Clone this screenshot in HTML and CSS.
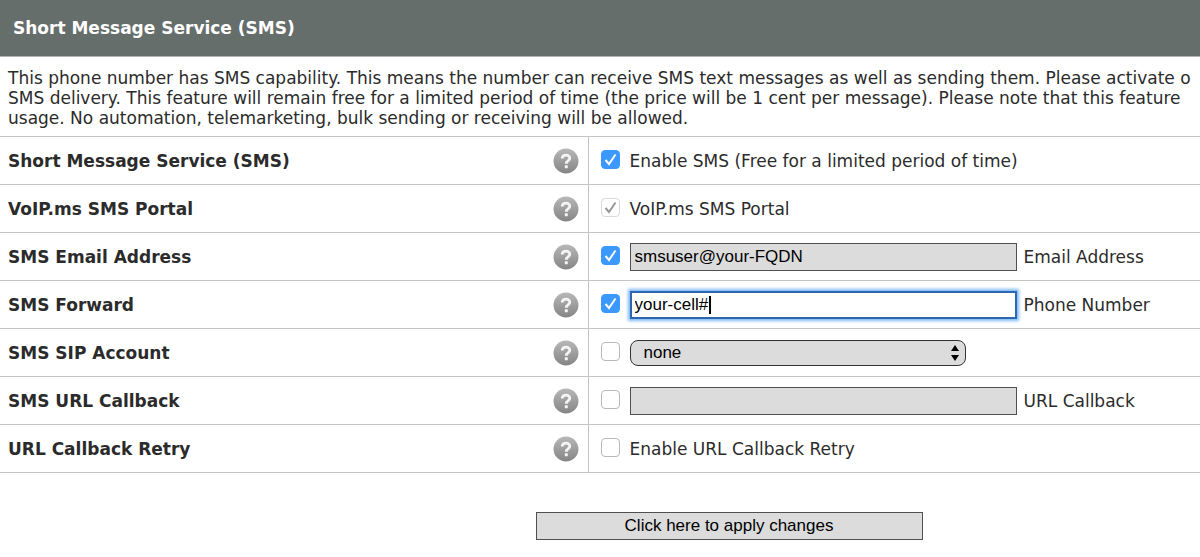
FILE: index.html
```html
<!DOCTYPE html>
<html lang="en">
<head>
  <meta charset="UTF-8" />
  <meta name="viewport" content="width=device-width, initial-scale=1.0"/>
  <title>Short Message Service (SMS)</title>
  <link rel="stylesheet" href="styles.css">
</head>
<body>
    <!-- shared icon for the help buttons -->
    <svg class="sprite" aria-hidden="true">
        <defs>
            <linearGradient id="ball" x1="0" y1="0" x2="0" y2="1">
                <stop offset="0" stop-color="#b8b8b8"/>
                <stop offset="1" stop-color="#858585"/>
            </linearGradient>
            <symbol id="help" viewBox="0 0 26 26">
                <circle cx="13" cy="13" r="12.5" fill="url(#ball)"/>
                <path d="M9.2 10.4C9.2 6 16.8 6 16.8 10.2C16.8 12.6 13.3 12.6 13.3 15.8" fill="none" stroke="#f4f4f4" stroke-width="2.8"/>
                <circle cx="13.3" cy="18.8" r="1.7" fill="#f4f4f4"/>
            </symbol>
        </defs>
    </svg>

    <form class="sms-form">
        <h1 class="title">Short Message Service (SMS)</h1>
        <p class="intro">This phone number has SMS capability. This means the number can receive SMS text messages as well as sending them. Please activate o<br>
        SMS delivery. This feature will remain free for a limited period of time (the price will be 1 cent per message). Please note that this feature<br>
        usage. No automation, telemarketing, bulk sending or receiving will be allowed.</p>

        <table class="settings">
            <tr>
                <th scope="row"><div class="name">Short Message Service (SMS) <button type="button" class="help" aria-label="Help"><svg><use href="#help"/></svg></button></div></th>
                <td><div class="value"><input type="checkbox" id="sms" checked><label for="sms">Enable SMS (Free for a limited period of time)</label></div></td>
            </tr>
            <tr>
                <th scope="row"><div class="name">VoIP.ms SMS Portal <button type="button" class="help" aria-label="Help"><svg><use href="#help"/></svg></button></div></th>
                <td><div class="value"><input type="checkbox" id="portal" checked disabled><label for="portal">VoIP.ms SMS Portal</label></div></td>
            </tr>
            <tr>
                <th scope="row"><div class="name">SMS Email Address <button type="button" class="help" aria-label="Help"><svg><use href="#help"/></svg></button></div></th>
                <td><div class="value"><input type="checkbox" aria-label="SMS Email Address" checked><span class="field"><input type="text" class="text" id="email" value="smsuser@your-FQDN"></span><label for="email">Email Address</label></div></td>
            </tr>
            <tr>
                <th scope="row"><div class="name">SMS Forward <button type="button" class="help" aria-label="Help"><svg><use href="#help"/></svg></button></div></th>
                <td><div class="value"><input type="checkbox" aria-label="SMS Forward" checked><span class="field"><input type="text" class="text active" id="phone" value="your-cell#"><span class="caret"></span></span><label for="phone">Phone Number</label></div></td>
            </tr>
            <tr>
                <th scope="row"><div class="name">SMS SIP Account <button type="button" class="help" aria-label="Help"><svg><use href="#help"/></svg></button></div></th>
                <td><div class="value"><input type="checkbox" aria-label="SMS SIP Account"><span class="field"><select class="account" aria-label="SIP Account"><option>none</option></select><svg class="arrows" viewBox="0 0 8 16"><path d="M4 0L8 6H0ZM0 10H8L4 16Z"/></svg></span></div></td>
            </tr>
            <tr>
                <th scope="row"><div class="name">SMS URL Callback <button type="button" class="help" aria-label="Help"><svg><use href="#help"/></svg></button></div></th>
                <td><div class="value"><input type="checkbox" aria-label="SMS URL Callback"><span class="field"><input type="text" class="text" id="url"></span><label for="url">URL Callback</label></div></td>
            </tr>
            <tr>
                <th scope="row"><div class="name">URL Callback Retry <button type="button" class="help" aria-label="Help"><svg><use href="#help"/></svg></button></div></th>
                <td><div class="value"><input type="checkbox" id="retry"><label for="retry">Enable URL Callback Retry</label></div></td>
            </tr>
        </table>

        <div class="actions">
            <button type="submit" class="apply">Click here to apply changes</button>
        </div>
    </form>
</body>
</html>
```

FILE: styles.css
```css
* {
    margin: 0;
    padding: 0;
    box-sizing: border-box;
}

body {
    background-color: #fff;
    color: #2b2b2b;
    font-family: Verdana, 'DejaVu Sans', sans-serif;
    font-size: 17px;
    line-height: 20px;
    overflow: hidden;
}

.sprite {
    position: absolute;
    width: 0;
    height: 0;
}

.title {
    background-color: #666e6c;
    color: #fff;
    font-size: 17px;
    line-height: 20px;
    padding: 18px 13px;
    border-bottom: 1px solid #b0b0b0;
}

.intro {
    padding: 11px 8px 8px;
    white-space: nowrap;
}

/* Settings */
.settings {
    width: 100%;
    table-layout: fixed;
    border-collapse: collapse;
    border-top: 1px solid #c4c4c4;
}

.settings th,
.settings td {
    height: 48px;
    border-bottom: 1px solid #c4c4c4;
    text-align: left;
    vertical-align: middle;
    white-space: nowrap;
}

.settings th {
    width: 49%;
    border-right: 1px solid #c4c4c4;
}

.name {
    display: flex;
    align-items: center;
    justify-content: space-between;
    padding: 0 9px 0 8px;
}

.help {
    width: 26px;
    height: 26px;
    border: none;
    background: none;
    cursor: pointer;
}

.help svg {
    display: block;
    width: 26px;
    height: 26px;
}

.value {
    display: flex;
    align-items: center;
    padding-left: 12px;
}

.value label {
    margin-left: 7px;
}

input[type="checkbox"] {
    appearance: none;
    flex: none;
    width: 19px;
    height: 19px;
    margin: 0 10px 2px 0;
    border: 1px solid #b9b9b9;
    border-radius: 4px;
    background-color: #fff;
}

input[type="checkbox"] + label {
    margin-left: 0;
}

input[type="checkbox"]:checked {
    border-color: #3b99fc;
    background: #3b99fc url("data:image/svg+xml,%3Csvg xmlns='http://www.w3.org/2000/svg' viewBox='0 0 17 17'%3E%3Cpath d='M3.5 9L7 13L13.5 3.5' fill='none' stroke='white' stroke-width='2'/%3E%3C/svg%3E") center / 17px no-repeat;
}

input[type="checkbox"]:checked:disabled {
    border-color: #d9d9d9;
    background: #fff url("data:image/svg+xml,%3Csvg xmlns='http://www.w3.org/2000/svg' viewBox='0 0 17 17'%3E%3Cpath d='M3.5 9L7 13L13.5 3.5' fill='none' stroke='%23999' stroke-width='2'/%3E%3C/svg%3E") center / 17px no-repeat;
}

.field {
    position: relative;
    display: flex;
}

.text,
.account,
.apply {
    font-family: Arial, 'Liberation Sans', sans-serif;
    font-size: 17px;
    color: #000;
    background-color: #dcdcdc;
    border: 1px solid #505050;
    height: 28px;
}

.text {
    width: 387px;
    padding: 0 4px;
}

.text.active {
    background-color: #fff;
    border: 2px solid #2c66b0;
    padding: 0 3px;
    outline: none;
    box-shadow: 0 0 3px 2px #7db9f5;
}

.caret {
    position: absolute;
    top: 5px;
    left: 79px;
    width: 2px;
    height: 18px;
    background-color: #000;
}

.account {
    appearance: none;
    width: 336px;
    height: 26px;
    padding: 0 13px;
    border-color: #333;
    border-radius: 8px;
}

.arrows {
    position: absolute;
    top: 5px;
    right: 7px;
    width: 8px;
    height: 16px;
    pointer-events: none;
}

/* Submit */
.actions {
    display: flex;
    justify-content: center;
    padding: 39px 0 17px 258px;
}

.apply {
    width: 387px;
    cursor: pointer;
}
```
